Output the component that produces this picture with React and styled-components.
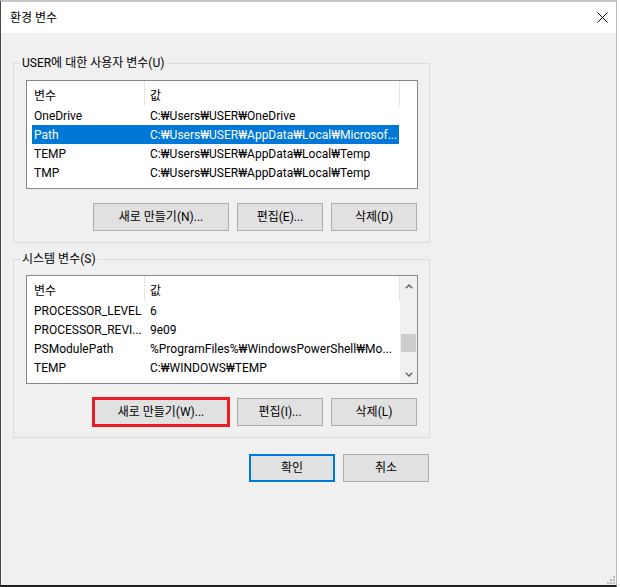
import React from 'react';
import styled, { createGlobalStyle, css } from 'styled-components';

const GlobalStyle = createGlobalStyle`
  html, body { margin: 0; padding: 0; background: #ffffff; }
  body {
    font-family: Roboto, "Noto Sans CJK KR", sans-serif;
    font-size: 12px;
    color: #000;
  }
  * { box-sizing: border-box; }
`;

const Window = styled.div`
  position: relative;
  width: 617px;
  height: 587px;
  display: flex;
  flex-direction: column;
  background: #f0f0f0;
  border-left: 1px solid #4a4a4a;
  border-right: 1px solid #bdbdbd;
  border-top: 2px solid #c6c6c6;
  border-bottom: 2px solid #1f1f1f;
`;

const TitleBar = styled.div`
  height: 31px;
  flex: none;
  background: #ffffff;
  display: flex;
  align-items: center;
  justify-content: space-between;
  padding: 0 8px 0 9px;
`;

const Title = styled.span`
  font-size: 12px;
  line-height: 16px;
`;

const CloseIcon = styled.svg`
  width: 11px;
  height: 11px;
  display: block;
`;

const Body = styled.div`
  flex: 1;
  display: flex;
  flex-direction: column;
  padding: 22px 0 0 12px;
`;

const Group = styled.fieldset`
  width: 417px;
  margin: ${p => (p.$first ? '0' : '8px')} 0 0 0;
  border: 1px solid #dcdcdc;
  padding: ${p => p.$padTop}px 11px 11px 12px;
  min-width: 0;
`;

const Legend = styled.legend`
  font-size: 12px;
  line-height: 16px;
  padding: 0 2px;
  margin-left: -6px;
`;

const ListBox = styled.div`
  height: 109px;
  border: 1px solid #828790;
  background: #ffffff;
  display: flex;
  overflow: hidden;
`;

const Table = styled.div`
  flex: 1;
  min-width: 0;
  display: flex;
  flex-direction: column;
`;

const HeaderRow = styled.div`
  display: grid;
  grid-template-columns: 118px 255px;
  height: 25px;
  flex: none;
`;

const HeaderCell = styled.div`
  border-right: 1px solid #e5e5e5;
  padding-left: ${p => p.$pad}px;
  padding-top: 2px;
  display: flex;
  align-items: center;
  white-space: nowrap;
  overflow: hidden;
`;

const Row = styled.div`
  display: grid;
  grid-template-columns: 112px 255px;
  width: 367px;
  height: 19px;
  margin-left: 5px;
  align-items: center;
  background: ${p => (p.$selected ? '#0078d7' : 'transparent')};
  color: ${p => (p.$selected ? '#ffffff' : '#000000')};
`;

const Cell = styled.div`
  padding-left: ${p => p.$pad}px;
  padding-top: 1px;
  white-space: nowrap;
  overflow: hidden;
  line-height: 18px;
`;

const ScrollBar = styled.div`
  width: 17px;
  flex: none;
  background: #f0f0f0;
  display: flex;
  flex-direction: column;
`;

const ArrowBox = styled.div`
  height: 17px;
  flex: none;
  display: flex;
  align-items: center;
  justify-content: center;
  padding-top: ${p => (p.$up ? '3px' : '0')};
`;

const Track = styled.div`
  flex: 1;
  display: flex;
  flex-direction: column;
`;

const Thumb = styled.div`
  height: 18px;
  margin: ${p => p.$offset}px 1px 0 1px;
  background: #cdcdcd;
`;

const ButtonRow = styled.div`
  display: flex;
  justify-content: flex-end;
  gap: 8px;
  margin-top: ${p => p.$top}px;
  padding-right: 1px;
  width: ${p => (p.$wide ? '417px' : 'auto')};
`;

const Button = styled.button`
  width: ${p => p.$w}px;
  height: 28px;
  margin: 0;
  padding: 0;
  background: #e1e1e1;
  border: 1px solid #adadad;
  font-family: inherit;
  font-size: 12px;
  color: #000;
  line-height: 16px;
  ${p => p.$default && css`
    border: 2px solid #0078d7;
  `}
  ${p => p.$marked && css`
    outline: 3px solid #ed1c24;
    outline-offset: -2px;
  `}
`;

const Grip = styled.svg`
  position: absolute;
  right: 1px;
  bottom: 1px;
  width: 8px;
  height: 8px;
`;

const Chevron = ({ up }) => (
  <svg width="8" height="5" viewBox="0 0 8 5">
    <path
      d={up ? 'M0.8 4.3 L4 1.1 L7.2 4.3' : 'M0.8 0.7 L4 3.9 L7.2 0.7'}
      fill="none"
      stroke="#606060"
      strokeWidth="1.4"
    />
  </svg>
);

const userVars = [
  { name: 'OneDrive', value: 'C:₩Users₩USER₩OneDrive' },
  { name: 'Path', value: 'C:₩Users₩USER₩AppData₩Local₩Microsof...', selected: true },
  { name: 'TEMP', value: 'C:₩Users₩USER₩AppData₩Local₩Temp' },
  { name: 'TMP', value: 'C:₩Users₩USER₩AppData₩Local₩Temp' },
];

const systemVars = [
  { name: 'PROCESSOR_LEVEL', value: '6' },
  { name: 'PROCESSOR_REVI...', value: '9e09' },
  { name: 'PSModulePath', value: '%ProgramFiles%₩WindowsPowerShell₩Mo...' },
  { name: 'TEMP', value: 'C:₩WINDOWS₩TEMP' },
];

const VarTable = ({ rows }) => (
  <Table>
    <HeaderRow>
      <HeaderCell $pad={7}>변수</HeaderCell>
      <HeaderCell $pad={5}>값</HeaderCell>
    </HeaderRow>
    {rows.map((r, i) => (
      <Row key={i} $selected={r.selected}>
        <Cell $pad={2}>{r.name}</Cell>
        <Cell $pad={6}>{r.value}</Cell>
      </Row>
    ))}
  </Table>
);

export default function App() {
  return (
    <>
      <GlobalStyle />
      <Window>
        <TitleBar>
          <Title>환경 변수</Title>
          <CloseIcon viewBox="0 0 11 11">
            <path d="M0.5 0.5 L10.5 10.5 M10.5 0.5 L0.5 10.5" stroke="#000" strokeWidth="1" fill="none" />
          </CloseIcon>
        </TitleBar>
        <Body>
          <Group $first $padTop={9}>
            <Legend>USER에 대한 사용자 변수(U)</Legend>
            <ListBox>
              <VarTable rows={userVars} />
            </ListBox>
            <ButtonRow $top={14}>
              <Button $w={136}>새로 만들기(N)...</Button>
              <Button $w={86}>편집(E)...</Button>
              <Button $w={86}>삭제(D)</Button>
            </ButtonRow>
          </Group>
          <Group $padTop={8}>
            <Legend>시스템 변수(S)</Legend>
            <ListBox>
              <VarTable rows={systemVars} />
              <ScrollBar>
                <ArrowBox $up><Chevron up /></ArrowBox>
                <Track>
                  <Thumb $offset={41} />
                </Track>
                <ArrowBox><Chevron /></ArrowBox>
              </ScrollBar>
            </ListBox>
            <ButtonRow $top={14}>
              <Button $w={136} $marked>새로 만들기(W)...</Button>
              <Button $w={86}>편집(I)...</Button>
              <Button $w={86}>삭제(L)</Button>
            </ButtonRow>
          </Group>
          <ButtonRow $top={16} $wide>
            <Button $w={86} $default>확인</Button>
            <Button $w={86}>취소</Button>
          </ButtonRow>
        </Body>
        <Grip viewBox="0 0 8 8">
          <rect x="6" y="0" width="2" height="2" fill="#bcbcbc" />
          <rect x="3" y="3" width="2" height="2" fill="#bcbcbc" />
          <rect x="6" y="3" width="2" height="2" fill="#bcbcbc" />
          <rect x="0" y="6" width="2" height="2" fill="#bcbcbc" />
          <rect x="3" y="6" width="2" height="2" fill="#bcbcbc" />
          <rect x="6" y="6" width="2" height="2" fill="#bcbcbc" />
        </Grip>
      </Window>
    </>
  );
}
